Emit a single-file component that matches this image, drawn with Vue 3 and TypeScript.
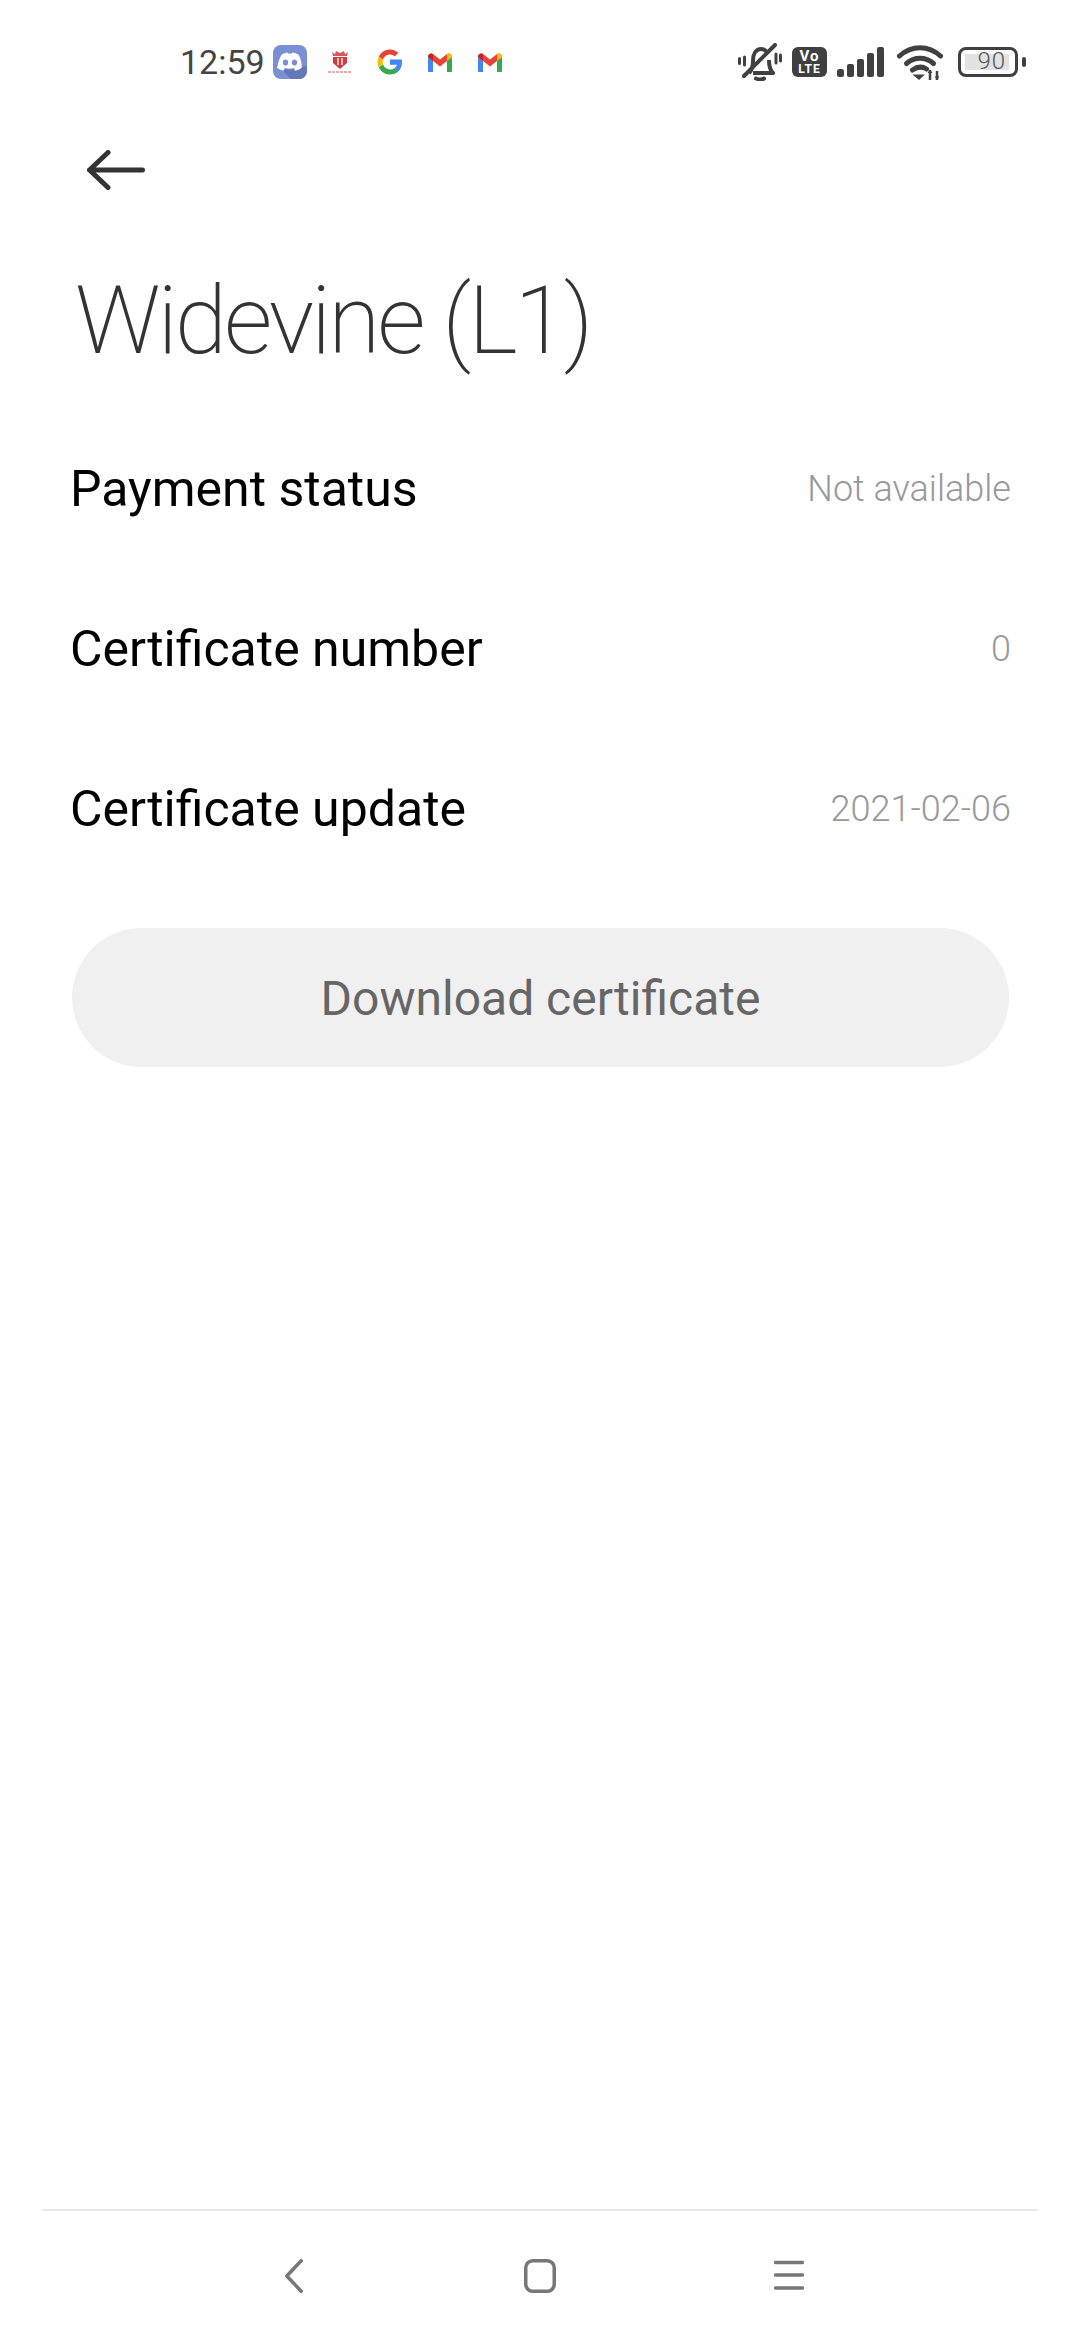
<script setup lang="ts">
const rows = [
  { label: "Payment status", value: "Not available" },
  { label: "Certificate number", value: "0" },
  { label: "Certificate update", value: "2021-02-06" },
];
</script>

<template>
  <div class="page">
    <div class="status-bar">
      <div class="status-left">
        <span class="clock">12:59</span>
        <svg class="discord" viewBox="0 0 34 34">
          <rect width="34" height="34" rx="8" fill="#7a90d4" />
          <path d="M7 23l10 2 17-4v5a8 8 0 0 1-8 8H18z" fill="#6478b8" />
          <g transform="translate(17 17) scale(1.220) translate(-17 -17)">
            <path d="M10 11c2-1.200 4-1.800 5-1.800l.5 1c1-.2 2-.2 3 0l.5-1c1 0 3 .6 5 1.800 2 3.600 2.800 7.200 2.600 10.800-1.800 1.400-3.600 2.200-5.200 2.400l-1.200-1.800 1.800-1c-3.600 1.500-7.400 1.500-11 0l1.800 1-1.200 1.800c-1.600-.2-3.400-1-5.200-2.400C7.200 18.200 8 14.600 10 11z" fill="#fff" />
            <ellipse cx="13.300" cy="17.500" rx="2.200" ry="2.500" fill="#7a90d4" />
            <ellipse cx="20.700" cy="17.500" rx="2.200" ry="2.500" fill="#7a90d4" />
          </g>
        </svg>
        <svg class="app-icon" viewBox="0 0 34 34">
          <path d="M9 7l3 2 1-3 4 2 4-2 1 3 3-2-1 4H10z" fill="#d9585c" />
          <path d="M10 12h14v6l-7 6-7-6z" fill="#cf3b3f" />
          <path d="M15 13v7M19 13v7" stroke="#fff" stroke-width="1.300" />
          <path d="M5 27h24" stroke="#dd8f91" stroke-width="1.600" stroke-dasharray="3 1" />
        </svg>
        <svg class="app-icon" viewBox="0 0 34 34">
          <path d="M29 17.200c0-.9-.1-1.800-.2-2.700H17v5.200h6.800c-.3 1.500-1.200 2.900-2.500 3.700l4 3.200c2.300-2.200 3.700-5.400 3.700-9.400z" fill="#4285f4" />
          <path d="M17 29.500c3.400 0 6.200-1.100 8.300-3l-4-3.200c-1.100.8-2.500 1.200-4.300 1.200-3.300 0-6-2.200-7-5.200l-4.200 3.200c2 4.200 6.400 7 11.200 7z" fill="#34a853" />
          <path d="M10 19.300c-.5-1.500-.5-3.100 0-4.600l-4.200-3.200a12.500 12.500 0 0 0 0 11z" fill="#fbbc05" />
          <path d="M17 9.500c1.800 0 3.500.7 4.800 1.900l3.600-3.600A12.300 12.300 0 0 0 5.800 11.500l4.200 3.200c1-3 3.700-5.200 7-5.200z" fill="#ea4335" />
        </svg>
        <svg v-for="n in 2" :key="n" class="app-icon" viewBox="0 0 34 34">
          <path d="M5 12v14a1 1 0 0 0 1 1h4V16z" fill="#4285f4" />
          <path d="M24 16v11h4a1 1 0 0 0 1-1V12z" fill="#34a853" />
          <path d="M5 12c0-3 3-4.500 5-3l7 5.500L24 9c2-1.500 5 0 5 3l-5 4-7 5.500L10 16z" fill="#ea4335" />
          <path d="M24 9c2-1.500 5 0 5 3l-5 4z" fill="#fbbc05" />
          <path d="M5 12c0-3 3-4.500 5-3v7z" fill="#c5221f" />
        </svg>
      </div>
      <div class="status-right">
        <svg class="mute" viewBox="0 0 44 38" fill="none" stroke="#404040" stroke-width="4">
          <path d="M11 30c3-3 4-6 4-12 0-7 3-12 8-12 3 0 5 1.500 6.500 4M31 17c0 7 1 10 4 13H15" stroke-linejoin="round" />
          <path d="M18 35.500c3 1.300 6 1.300 8 0" stroke-linecap="round" />
          <path d="M6 33L37 2" stroke-linecap="round" />
          <path d="M6.500 14v8M1.500 15.500v5M38 11v9M42.500 12v6" stroke-width="3" stroke-linecap="round" />
        </svg>
        <div class="volte"><span class="vo">Vo</span><span class="lte">LTE</span></div>
        <svg class="signal" viewBox="0 0 47 30" fill="#404040">
          <rect x="0" y="22" width="7" height="8" rx="2.500" />
          <rect x="10" y="17" width="7" height="13" rx="2" />
          <rect x="20" y="12" width="7" height="18" rx="2" />
          <rect x="30" y="6" width="7" height="24" rx="2" />
          <rect x="40" y="0" width="7" height="30" rx="2" />
        </svg>
        <svg class="wifi" viewBox="0 0 46 35" fill="none" stroke="#404040" stroke-width="5" stroke-linecap="round">
          <path d="M2.500 11c12-11 29-11 41 0" />
          <path d="M9.500 18.500c8-7 19-7 27 0" />
          <path d="M15.500 25c5-3.500 10-3.500 14-1" />
          <path d="M15.500 29.500l6.500 5.500 6-5.500z" fill="#404040" stroke="none" />
          <path d="M33 25v10M40 26v9" stroke-width="2.500" stroke-linecap="butt" />
          <path d="M30.500 28l2.500-3.500 2.500 3.500zM37.500 31.500l2.500 3.500 2.500-3.500z" fill="#404040" stroke="none" />
        </svg>
        <div class="battery">
          <div class="battery-body"><span class="battery-fill">90</span></div>
          <div class="battery-tip"></div>
        </div>
      </div>
    </div>

    <div class="app-bar">
      <svg class="back" viewBox="0 0 58 40" fill="none" stroke="#333" stroke-width="5" stroke-linecap="round" stroke-linejoin="round">
        <path d="M2.500 20H55.500M21 2.500L2.500 20L21 37.500" />
      </svg>
    </div>

    <h1 class="title">Widevine (L1)</h1>

    <div class="rows">
      <div v-for="row in rows" :key="row.label" class="row">
        <span class="label">{{ row.label }}</span>
        <span class="value">{{ row.value }}</span>
      </div>
    </div>

    <button class="download">Download certificate</button>

    <div class="spacer"></div>

    <div class="nav">
      <svg class="nav-back" viewBox="0 0 18 34" fill="none" stroke="#777" stroke-width="3.500" stroke-linecap="round" stroke-linejoin="round">
        <path d="M16.200 1.800L1.800 17l14.400 15.200" />
      </svg>
      <svg class="nav-home" viewBox="0 0 32 34" fill="none" stroke="#777" stroke-width="3.500">
        <rect x="1.750" y="1.750" width="28.500" height="30.500" rx="7" />
      </svg>
      <svg class="nav-menu" viewBox="0 0 30 34" fill="none" stroke="#777" stroke-width="3.500" stroke-linecap="round">
        <path d="M1.500 3.500h27M1.500 16h27M1.500 29h27" />
      </svg>
    </div>
  </div>
</template>

<style scoped>
.page {
  width: 1080px;
  height: 2340px;
  display: flex;
  flex-direction: column;
  font-family: Roboto, "Noto Sans", sans-serif;
  background: #fff;
  overflow: hidden;
}

.status-bar {
  height: 124px;
  flex-shrink: 0;
  display: flex;
  justify-content: space-between;
  align-items: center;
  padding: 0 54px 0 180px;
  box-sizing: border-box;
}

.status-left,
.status-right {
  display: flex;
  align-items: center;
}

.clock {
  font-size: 34px;
  color: #444;
  margin-right: 8px;
}

.discord {
  width: 34px;
  height: 34px;
  margin-right: 16px;
}

.app-icon {
  width: 34px;
  height: 34px;
  margin-right: 16px;
}

.mute {
  width: 44px;
  height: 38px;
  margin-right: 10px;
}

.volte {
  width: 35px;
  height: 30px;
  margin-right: 10px;
  border-radius: 6px;
  background: #404040;
  color: #fff;
  font-weight: 700;
  display: flex;
  flex-direction: column;
  align-items: center;
  justify-content: center;
}

.vo {
  font-size: 15px;
  line-height: 13px;
  letter-spacing: 1px;
}

.lte {
  font-size: 12px;
  line-height: 12px;
  letter-spacing: 1px;
}

.signal {
  width: 47px;
  height: 30px;
  margin-right: 13px;
}

.wifi {
  width: 46px;
  height: 35px;
  margin-right: 15px;
}

.battery {
  display: flex;
  align-items: center;
  gap: 4px;
}

.battery-body {
  width: 60px;
  height: 30px;
  box-sizing: border-box;
  border: 3.500px solid #404040;
  border-radius: 8px;
  padding: 4px 6px 4px 4px;
  display: flex;
}

.battery-fill {
  flex: 1;
  background: #e2e2e2;
  color: #555;
  font-size: 24px;
  font-weight: 300;
  letter-spacing: 1px;
  line-height: 15px;
  text-align: right;
  padding-right: 3px;
}

.battery-tip {
  width: 4px;
  height: 10px;
  border-radius: 2px;
  background: #404040;
}

.app-bar {
  height: 92px;
  flex-shrink: 0;
  padding-left: 87px;
  display: flex;
  align-items: center;
}

.back {
  width: 58px;
  height: 40px;
}

.title {
  margin: 49px 0 0 75px;
  font-size: 95px;
  font-weight: 200;
  letter-spacing: -3.100px;
  line-height: 112px;
  color: #333;
}

.rows {
  margin-top: 32px;
  padding: 0 69px 0 70px;
}

.row {
  height: 160px;
  display: flex;
  justify-content: space-between;
  align-items: center;
}

.label {
  font-size: 50px;
  color: #000;
}

.value {
  font-size: 36px;
  font-weight: 300;
  color: #999;
}

.download {
  margin: 39px 71px 0 72px;
  height: 139px;
  padding: 2px 0 0;
  border: none;
  border-radius: 70px;
  background: #f0f0f0;
  color: #666;
  font-family: inherit;
  font-size: 48px;
  flex-shrink: 0;
}

.spacer {
  flex: 1;
}

.nav {
  margin: 0 42px;
  height: 131px;
  box-sizing: border-box;
  border-top: 2px solid #e8e8e8;
  padding: 48px 0 0 243px;
  display: flex;
  align-items: flex-start;
}

.nav-back {
  width: 18px;
  height: 34px;
}

.nav-home {
  width: 32px;
  height: 34px;
  margin: 0 218px 0 221px;
}

.nav-menu {
  width: 30px;
  height: 34px;
}
</style>

<style>
body {
  background: #fff;
}
</style>
